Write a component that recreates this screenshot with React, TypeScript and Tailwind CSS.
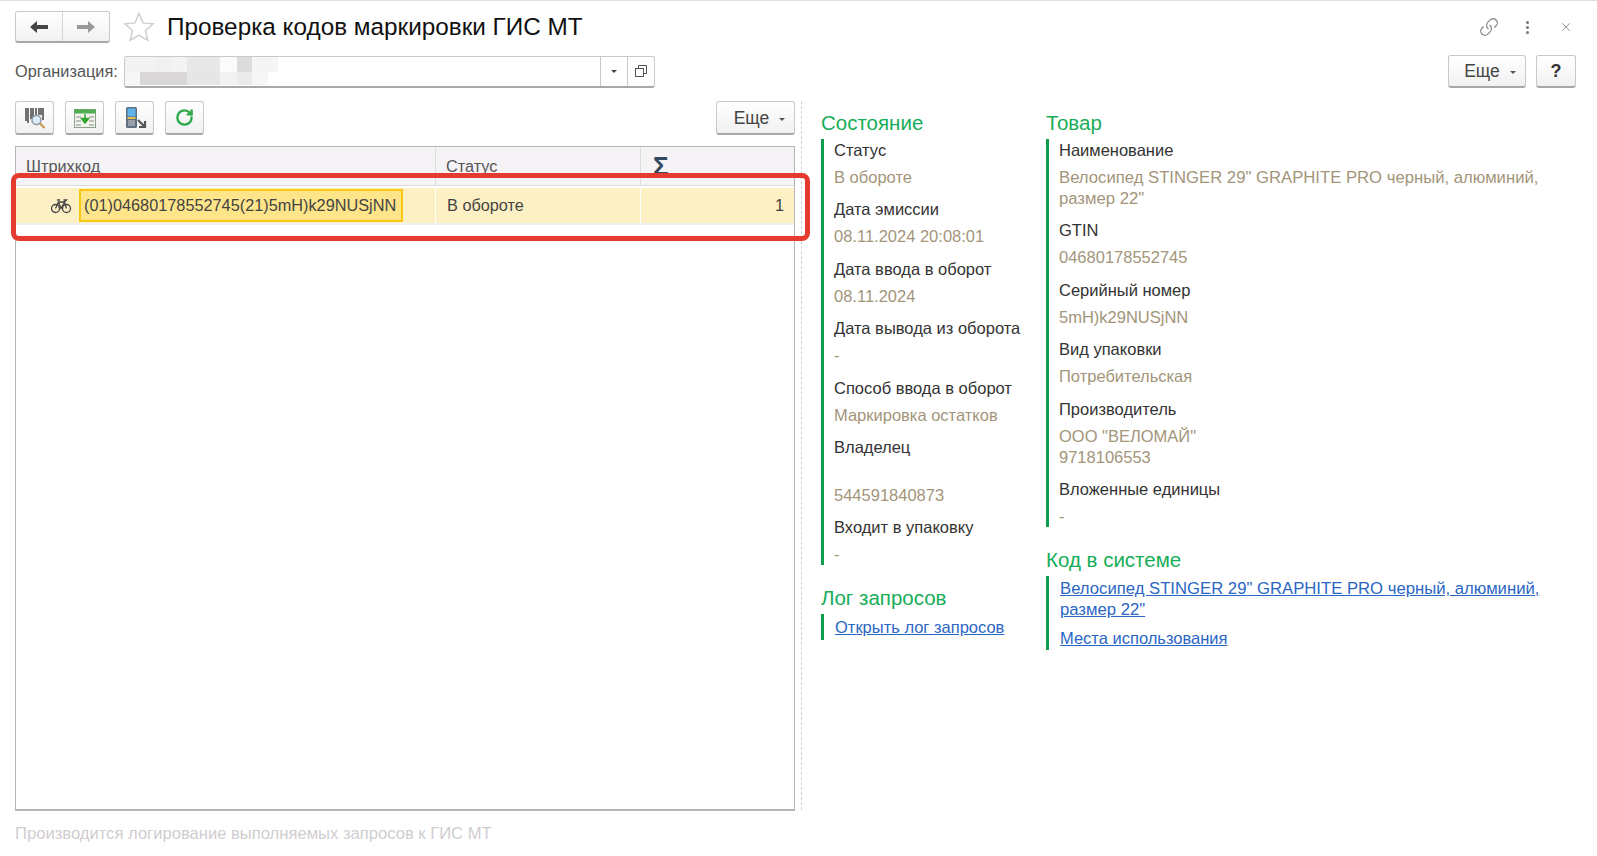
import { Link as LinkIcon, RotateCw, X } from "lucide-react";

const btn =
  "flex items-center justify-center rounded-[3px] border border-[#c9c9c9] border-b-2 border-b-[#a8a8a8] bg-gradient-to-b from-white to-[#f1f1f1]";

function Caret() {
  return <span className="ml-[10px] mt-0.5 h-0 w-0 border-x-[3px] border-t-[3px] border-x-transparent border-t-[#555]" />;
}

function Field({ label, children }: { label: string; children: React.ReactNode }) {
  return (
    <div className="mb-[10.4px]">
      <div className="h-[22px] leading-[22px] text-[#333]">{label}</div>
      <div className="mt-[6px] leading-[21px] text-[#a3957a]">{children}</div>
    </div>
  );
}

function Section({ title, children, className, inset }: { title: string; children: React.ReactNode; className?: string; inset?: string }) {
  return (
    <div className={className}>
      <div className="h-[26px] text-[20.5px] leading-[26px] text-[#17ad58]">{title}</div>
      <div className={`mt-[3px] border-l-[3px] border-[#0e9c4d] ${inset ?? "pl-[10px]"}`}>{children}</div>
    </div>
  );
}

function BarcodeIcon() {
  return (
    <svg width="24" height="24" viewBox="0 0 24 24">
      <path d="M3 2v13M5 2v15M8 2v11M10 2v9M13 2v7M16 2v7M18 2v7M20 2v12" stroke="#444" strokeWidth="1.5" />
      <circle cx="13.5" cy="14" r="4.500" fill="#dcecf8" stroke="#8a9aa8" strokeWidth="1.5" />
      <path d="M17 17.500l4.500 4.500" stroke="#c89a4a" strokeWidth="2.2" />
    </svg>
  );
}

function TableIcon() {
  return (
    <svg width="24" height="24" viewBox="0 0 24 24">
      <rect x="1.5" y="3.500" width="21" height="18" fill="#f2f5ee" stroke="#8aa08a" />
      <rect x="1.5" y="3.500" width="21" height="4" fill="#4cae4c" />
      <path d="M3 11h5M3 15h5M3 19h5M16 11h5M16 15h5M16 19h5" stroke="#8a8a8a" />
      <path d="M12 8v5M8.500 12.500h7L12 17z" fill="#2fa52f" stroke="#2fa52f" strokeWidth="1.5" />
    </svg>
  );
}

function ScannerIcon() {
  return (
    <svg width="24" height="24" viewBox="0 0 24 24">
      <rect x="3" y="1" width="11" height="21" rx="1.5" fill="#5d6f80" />
      <rect x="4.500" y="2.500" width="8" height="8" fill="#5fb2ea" />
      <rect x="4.500" y="11" width="8" height="2" fill="#e3c14a" />
      <path d="M5 15h7M5 17h7M5 19h7" stroke="#d5d5d5" />
      <path d="M15 14l6 6M22 15v6h-6" stroke="#555" strokeWidth="2.2" fill="none" />
    </svg>
  );
}

function BikeIcon() {
  return (
    <svg width="22" height="16" viewBox="0 0 22 16" fill="none" stroke="#444" strokeWidth="1.3">
      <circle cx="5.500" cy="10.500" r="4" />
      <circle cx="16.500" cy="10.500" r="4" />
      <path d="M5.500 10.500L8.500 4h6l2 6.500M8.500 4L11 10.500l3.500-6.500M7 2h3M13.500 2h3l-2 2" />
    </svg>
  );
}

function Star() {
  return (
    <svg width="32" height="32" viewBox="0 0 32 32">
      <path
        d="M16 2.500l4 9.400 10.200.9-7.700 6.700 2.300 10-8.800-5.300-8.800 5.300 2.300-10-7.700-6.700 10.200-.9z"
        fill="#fff"
        stroke="#cfcfcf"
        strokeWidth="1.5"
      />
    </svg>
  );
}

function OrgBlur() {
  const blocks = [
    [0, 0, 30, 15, "#f3f3f3"], [30, 0, 17, 15, "#f0f0f0"], [47, 0, 15, 15, "#f3f3f3"], [62, 0, 33, 15, "#e8e8e8"],
    [95, 0, 17, 15, "#fbfbfb"], [112, 0, 15, 15, "#dcdcdc"], [127, 0, 26, 15, "#f5f5f5"],
    [0, 15, 15, 13, "#f6f6f6"], [15, 15, 47, 13, "#dad7d8"], [62, 15, 33, 13, "#e6e6e6"], [95, 15, 17, 13, "#f2f2f2"],
    [112, 15, 15, 13, "#ebebeb"], [127, 15, 16, 13, "#f6f6f6"],
  ] as const;
  return (
    <svg width="153" height="28" className="absolute left-0 top-0">
      {blocks.map(([x, y, w, h, c], i) => (
        <rect key={i} x={x} y={y} width={w} height={h} fill={c} />
      ))}
    </svg>
  );
}

export default function App() {
  return (
    <div className="flex h-[856px] w-[1597px] flex-col overflow-hidden border-t border-[#dedede] bg-white font-['Liberation_Sans',sans-serif] text-[16.3px] text-[#333]">
      {/* Title */}
      <div className="flex h-[42px] items-center pl-[15px] pr-[24px] pt-[10px]">
        <div className={`${btn} h-[32px] w-[95px]`}>
          <div className="flex h-full flex-1 items-center justify-center border-r border-[#d5d5d5]">
            <svg width="20" height="16" viewBox="0 0 20 16"><path d="M1 8l7-6v4h11v4H8v4z" fill="#444" /></svg>
          </div>
          <div className="flex h-full flex-1 items-center justify-center">
            <svg width="20" height="16" viewBox="0 0 20 16"><path d="M19 8l-7-6v4H1v4h11v4z" fill="#999" /></svg>
          </div>
        </div>
        <div className="ml-[13px]"><Star /></div>
        <div className="ml-[12px] whitespace-nowrap text-[24.3px] leading-[30px] text-[#111]">Проверка кодов маркировки ГИС МТ</div>
        <div className="ml-auto flex items-center text-[#888]">
          <LinkIcon size={20} strokeWidth={1.5} className="-scale-x-100 rotate-90" />
          <div className="ml-[27px] flex flex-col gap-[2px]">
            <span className="h-[3px] w-[3px] rounded-full bg-[#777]" />
            <span className="h-[3px] w-[3px] rounded-full bg-[#777]" />
            <span className="h-[3px] w-[3px] rounded-full bg-[#777]" />
          </div>
          <X size={14} strokeWidth={1.5} className="ml-[30px]" />
        </div>
      </div>

      {/* Organization */}
      <div className="mt-[12px] flex h-[33px] items-center pl-[15px] pr-[21px]">
        <span className="w-[109px] text-[#555]">Организация:</span>
        <div className="relative flex h-[32px] w-[531px] rounded-[3px] border border-[#c9c9c9] border-b-2 border-b-[#a8a8a8]">
          <OrgBlur />
          <div className="ml-auto flex w-[27px] items-center justify-center border-l border-[#c9c9c9]">
            <span className="h-0 w-0 border-x-[3px] border-t-[3px] border-x-transparent border-t-[#444]" />
          </div>
          <div className="flex w-[27px] items-center justify-center border-l border-[#c9c9c9]">
            <svg width="12" height="12" viewBox="0 0 12 12" fill="none" stroke="#555"><path d="M3.500 3V.5h8v8H9" /><rect x=".5" y="3.500" width="8" height="8" /></svg>
          </div>
        </div>
        <div className={`${btn} ml-auto h-[33px] w-[78px] pl-[6px] pt-[1px] text-[17.5px] text-[#444]`}>Еще<Caret /></div>
        <div className={`${btn} ml-[10px] h-[33px] w-[40px] text-[18px] font-bold text-[#333]`}>?</div>
      </div>

      {/* Body */}
      <div className="mt-[13px] flex flex-1">
        <div className="ml-[15px] flex w-[780px] flex-col">
          <div className="flex h-[34px] gap-[11px]">
            <div className={`${btn} w-[39px]`}><BarcodeIcon /></div>
            <div className={`${btn} w-[39px]`}><TableIcon /></div>
            <div className={`${btn} w-[39px]`}><ScannerIcon /></div>
            <div className={`${btn} w-[39px]`}><RotateCw size={19} strokeWidth={3} className="text-[#2fa84a]" /></div>
            <div className={`${btn} ml-auto w-[79px] pl-[8px] pt-[1px] text-[17.5px] text-[#444]`}>Еще<Caret /></div>
          </div>

          <div className="relative mt-[11px] h-[665px] border border-[#b5b5b5] border-b-2">
            <div className="flex h-[39px] border-b border-[#dedede] bg-[#f5f3f6] text-[#555]">
              <div className="w-[420px] border-r border-[#dcdcdc] pl-[10px] pt-[7px]">Штрихкод</div>
              <div className="w-[205px] border-r border-[#dcdcdc] pl-[10px] pt-[7px]">Статус</div>
              <div className="flex-1 pl-[12px] text-[26px] font-bold leading-[38px] text-[#34495e]">Σ</div>
            </div>
            <div className="mt-[2px] flex h-[35px] items-center bg-[#fdf0c4] text-[#444]">
              <div className="flex h-full w-[420px] items-center border-r border-white pl-[34px]">
                <BikeIcon />
                <div className="ml-[7px] flex h-[33px] w-[324px] items-center border-2 border-[#fbc715] bg-[#ffe58a] pl-[3px] whitespace-nowrap">(01)04680178552745(21)5mH)k29NUSjNN</div>
              </div>
              <div className="flex h-full w-[205px] items-center border-r border-white pl-[11px]">В обороте</div>
              <div className="flex-1 pr-[10px] text-right">1</div>
            </div>
            <div className="h-[2px] bg-[#f0f0f0]" />
            {/* red highlight */}
            <div className="absolute left-[-5px] top-[26px] h-[68px] w-[799px] rounded-[8px] border-[5px] border-[#e53a30]" />
          </div>

          <div className="mt-[11px] text-[16.6px] text-[#d0cdd0]">Производится логирование выполняемых запросов к ГИС МТ</div>
        </div>

        <div className="ml-[6px] h-[709px] border-l border-dashed border-[#d0d0d0]" />

        <div className="ml-[19px] flex text-[16.5px]">
          <div className="w-[225px] pt-[9px]">
            <Section title="Состояние">
              <Field label="Статус">В обороте</Field>
              <Field label="Дата эмиссии">08.11.2024 20:08:01</Field>
              <Field label="Дата ввода в оборот">08.11.2024</Field>
              <Field label="Дата вывода из оборота">-</Field>
              <Field label="Способ ввода в оборот">Маркировка остатков</Field>
              <Field label="Владелец"><div className="mb-[1px] mt-[27px]">544591840873</div></Field>
              <div className="h-[22px] leading-[22px]">Входит в упаковку</div>
              <div className="mt-[6px] leading-[21px] text-[#a3957a]">-</div>
            </Section>
            <Section title="Лог запросов" className="mt-[20px]" inset="pl-[11px]">
              <a className="block py-[3px] leading-[20px] text-[#2a66c4] underline">Открыть лог запросов</a>
            </Section>
          </div>
          <div className="w-[500px] pt-[9px]">
            <Section title="Товар" inset="pl-[10px]">
              <Field label="Наименование"><span className="text-[16.7px]">Велосипед STINGER 29" GRAPHITE PRO черный, алюминий, размер 22"</span></Field>
              <Field label="GTIN">04680178552745</Field>
              <Field label="Серийный номер">5mH)k29NUSjNN</Field>
              <Field label="Вид упаковки">Потребительская</Field>
              <Field label="Производитель">ООО "ВЕЛОМАЙ"<br />9718106553</Field>
              <div className="h-[22px] leading-[22px]">Вложенные единицы</div>
              <div className="mt-[6px] leading-[21px] text-[#a3957a]">-</div>
            </Section>
            <Section title="Код в системе" className="mt-[20px]" inset="pl-[11px]">
              <a className="block pt-[2px] text-[16.7px] leading-[21px] text-[#2a66c4] underline">Велосипед STINGER 29" GRAPHITE PRO черный, алюминий, размер 22"</a>
              <a className="mt-[8px] block pb-[1px] leading-[21px] text-[#2a66c4] underline">Места использования</a>
            </Section>
          </div>
        </div>
      </div>
    </div>
  );
}
